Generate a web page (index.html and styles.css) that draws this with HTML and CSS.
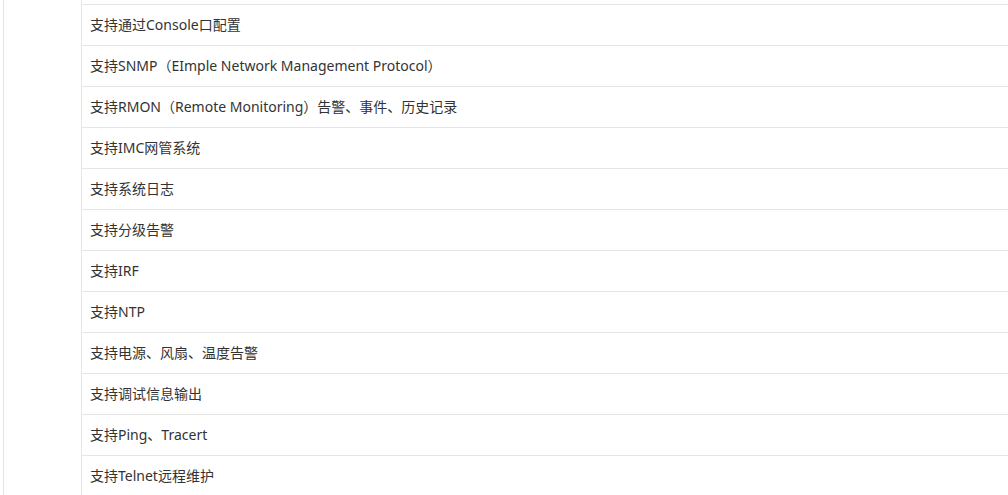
FILE: index.html
```html
<!DOCTYPE html>
<html lang="zh-CN">
<head>
<meta charset="utf-8">
<title>功能特性</title>
<link rel="stylesheet" href="styles.css">
</head>
<body>
<div class="table">
  <div class="side"></div>
  <ul class="rows">
    <li>支持通过Console口配置</li>
    <li>支持SNMP（EImple Network Management Protocol）</li>
    <li>支持RMON（Remote Monitoring）告警、事件、历史记录</li>
    <li>支持IMC网管系统</li>
    <li>支持系统日志</li>
    <li>支持分级告警</li>
    <li>支持IRF</li>
    <li>支持NTP</li>
    <li>支持电源、风扇、温度告警</li>
    <li>支持调试信息输出</li>
    <li>支持Ping、Tracert</li>
    <li>支持Telnet远程维护</li>
  </ul>
</div>
</body>
</html>
```

FILE: styles.css
```css
html, body {
  margin: 0;
  padding: 0;
  background: #fff;
  overflow: hidden;
}
.table {
  display: flex;
  margin-left: 3px;
  width: 1004px;
  height: 495px;
  border-left: 1px solid #e5e5e5;
  font-family: "Noto Sans", "Noto Sans CJK SC", sans-serif;
  font-size: 14px;
  color: #333;
}
.side {
  width: 77px;
  flex: none;
  border-right: 1px solid #e5e5e5;
}
.rows {
  list-style: none;
  margin: 0;
  padding: 4px 0 0;
  flex: 1;
}
.rows li {
  height: 40px;
  line-height: 39px;
  padding-left: 8px;
  border-top: 1px solid #e5e5e5;
  white-space: nowrap;
}
```
